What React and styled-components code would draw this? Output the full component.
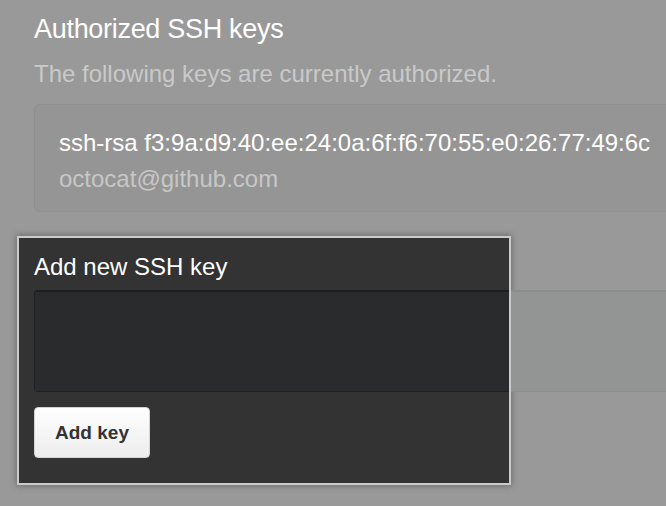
import React from "react";
import styled, { createGlobalStyle } from "styled-components";

const GlobalStyle = createGlobalStyle`
  html, body {
    margin: 0;
    padding: 0;
    background: #999999;
    overflow: hidden;
  }
  body {
    font-family: "Liberation Sans", Helvetica, Arial, sans-serif;
  }
`;

const Page = styled.div`
  width: 666px;
  height: 506px;
  box-sizing: border-box;
  padding: 13px 0 0 34px;
  overflow: hidden;
`;

const Heading = styled.h2`
  margin: 0;
  font-size: 27px;
  line-height: 32px;
  font-weight: normal;
  color: #ffffff;
  letter-spacing: -0.3px;
`;

const Lead = styled.p`
  margin: 15px 0 0;
  font-size: 24px;
  line-height: 28px;
  color: #c9c9c9;
`;

const KeyCard = styled.div`
  margin: 16px -40px 0 0;
  height: 108px;
  box-sizing: border-box;
  padding: 24px 24px 0;
  background: #959595;
  border: 1px solid #8f8f8f;
  border-radius: 6px;
  display: flex;
  flex-direction: column;
  gap: 8px;
`;

const KeyLine = styled.div`
  font-size: 24px;
  line-height: 28px;
  color: ${(p) => (p.$muted ? "#c7c7c7" : "#ffffff")};
  white-space: nowrap;
`;

const Highlight = styled.section`
  position: relative;
  margin: 24px 0 0 -17px;
  width: 494px;
  box-sizing: border-box;
  padding: 17px 17px 27px;
  background: #333333;
  box-shadow: 0 0 6px 1px rgba(0, 0, 0, 0.28);

  &::after {
    content: "";
    position: absolute;
    inset: 0;
    border: 2px solid #cbcbcb;
    pointer-events: none;
    z-index: 2;
  }
`;

const BoxTitle = styled.h3`
  margin: 0;
  font-size: 24px;
  line-height: 28px;
  font-weight: normal;
  color: #ffffff;
`;

const KeyInput = styled.textarea`
  display: block;
  margin-top: 9px;
  width: 720px;
  height: 102px;
  box-sizing: border-box;
  padding: 0;
  border: none;
  border-radius: 4px;
  resize: none;
  outline: none;
  background:
    linear-gradient(to right, #1d1e1f 0 475px, #8b8c8c 475px) top / 100% 2px no-repeat,
    linear-gradient(to right, #1f2021 0 475px, #8c8d8d 475px) bottom / 100% 1px no-repeat,
    linear-gradient(#1f2021, #1f2021) left / 1px 100% no-repeat,
    linear-gradient(to right, #2a2b2d 0 475px, #939494 475px);
`;

const Button = styled.button`
  display: block;
  margin-top: 15px;
  width: 116px;
  height: 51px;
  box-sizing: border-box;
  padding: 0;
  border: 1px solid #d3d3d3;
  border-radius: 4px;
  background: linear-gradient(#ffffff, #ececec);
  font-family: "Liberation Sans", Helvetica, Arial, sans-serif;
  font-size: 19px;
  font-weight: bold;
  color: #333333;
`;

export default function App() {
  return (
    <>
      <GlobalStyle />
      <Page>
        <Heading>Authorized SSH keys</Heading>
        <Lead>The following keys are currently authorized.</Lead>
        <KeyCard>
          <KeyLine>ssh-rsa f3:9a:d9:40:ee:24:0a:6f:f6:70:55:e0:26:77:49:6c</KeyLine>
          <KeyLine $muted>octocat@github.com</KeyLine>
        </KeyCard>
        <Highlight>
          <BoxTitle>Add new SSH key</BoxTitle>
          <KeyInput readOnly aria-label="Key" />
          <Button type="button">Add key</Button>
        </Highlight>
      </Page>
    </>
  );
}
